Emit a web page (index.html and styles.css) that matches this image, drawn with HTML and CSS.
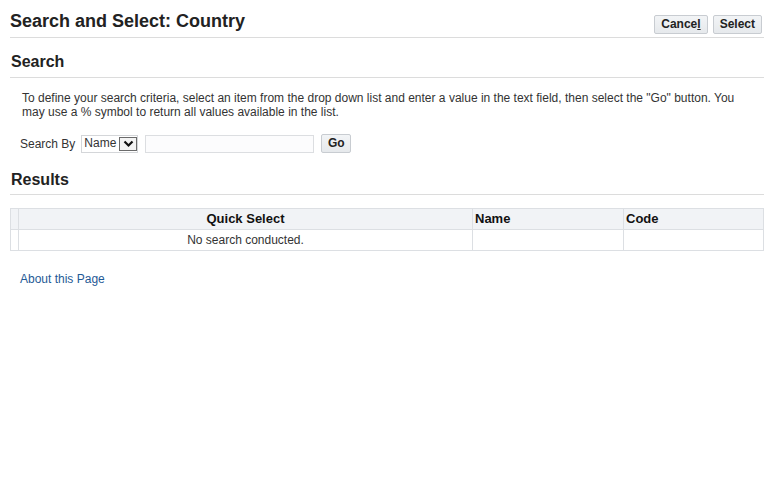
FILE: index.html
```html
<!DOCTYPE html>
<html lang="en">
<head>
<meta charset="utf-8">
<title>Search and Select: Country</title>
<link rel="stylesheet" href="styles.css">
</head>
<body>
<div class="page">
  <div class="titlebar">
    <h1 class="title">Search and Select: Country</h1>
    <div class="actions">
      <button class="btn" type="button">Cance<u>l</u></button>
      <button class="btn" type="button">Select</button>
    </div>
  </div>

  <h2 class="section">Search</h2>
  <p class="hint">To define your search criteria, select an item from the drop down list and enter a value in the text field, then select the "Go" button. You may use a % symbol to return all values available in the list.</p>
  <div class="searchrow">
    <span class="label">Search By</span>
    <span class="select"><span class="select-text">Name</span><span class="select-arrow"><svg width="11" height="8" viewBox="0 0 11 8"><path d="M1.5 1.5 L5.5 5.5 L9.5 1.5" fill="none" stroke="#111" stroke-width="2.2"/></svg></span></span>
    <span class="textfield"></span>
    <button class="btn go" type="button">Go</button>
  </div>

  <h2 class="section results-h">Results</h2>
  <table class="grid">
    <thead>
      <tr>
        <th class="sel"></th>
        <th class="qs">Quick Select</th>
        <th class="nm">Name</th>
        <th class="cd">Code</th>
      </tr>
    </thead>
    <tbody>
      <tr>
        <td class="sel"></td>
        <td class="qs center">No search conducted.</td>
        <td class="nm"></td>
        <td class="cd"></td>
      </tr>
    </tbody>
  </table>

  <a class="about" href="#">About this Page</a>
</div>
</body>
</html>
```
FILE: styles.css
```css
html, body {
  margin: 0;
  padding: 0;
  background: #ffffff;
}
body {
  font-family: "Liberation Sans", Arial, sans-serif;
  font-size: 12px;
  color: #333333;
}
.page {
  width: 754px;
  padding: 0 10px;
  display: flex;
  flex-direction: column;
}
.titlebar {
  display: flex;
  justify-content: space-between;
  align-items: flex-end;
  height: 37px;
  border-bottom: 1px solid #dcdcdc;
}
.title {
  margin: 0;
  padding-bottom: 5px;
  font-size: 18px;
  font-weight: bold;
  color: #222222;
  line-height: 22px;
}
.actions {
  display: flex;
  gap: 5px;
  padding-bottom: 3px;
  padding-right: 2px;
}
.btn {
  font-family: "Liberation Sans", Arial, sans-serif;
  font-size: 12px;
  font-weight: bold;
  color: #222222;
  background: linear-gradient(#f2f4f6, #e6e9ec);
  border: 1px solid #c8ccd1;
  border-radius: 2px;
  height: 19px;
  padding: 0 6px;
  line-height: 17px;
  margin: 0;
}
.btn u {
  text-decoration: underline;
}
.section {
  margin: 0;
  font-size: 16px;
  font-weight: bold;
  color: #222222;
  height: 40px;
  box-sizing: border-box;
  padding-top: 14px;
  padding-left: 1px;
  line-height: 20px;
  border-bottom: 1px solid #dcdcdc;
}
.hint {
  margin: 0;
  padding: 13px 12px 0 12px;
  line-height: 14px;
  color: #333333;
}
.searchrow {
  display: flex;
  align-items: center;
  margin-top: 15px;
  padding-left: 10px;
  height: 19px;
}
.label {
  margin-right: 6px;
}
.select {
  display: flex;
  align-items: center;
  box-sizing: border-box;
  width: 57px;
  height: 18px;
  border: 1px solid #d4d6d9;
  padding-left: 2px;
  margin-right: 7px;
  background: #ffffff;
}
.select-text {
  flex: 1;
  line-height: 14px;
  margin-top: -2px;
}
.select-arrow {
  display: flex;
  align-items: center;
  justify-content: center;
  box-sizing: border-box;
  width: 18px;
  height: 14px;
  border: 1px solid #6b6b6b;
  background: #f4f4f4;
}
.textfield {
  box-sizing: border-box;
  width: 169px;
  height: 18px;
  border: 1px solid #dcdee1;
  background: #fcfcfd;
  margin-right: 7px;
}
.go {
  width: 30px;
  padding: 0;
  height: 19px;
}
.results-h {
  height: 42px;
  padding-top: 17px;
  margin-top: 0;
}
.grid {
  margin-top: 13px;
  border-collapse: collapse;
  width: 754px;
  border: 1px solid #d5d8dc;
}
.grid th, .grid td {
  border: 1px solid #dcdfe3;
  padding: 0 2px;
}
.grid th {
  background: #f1f3f6;
  height: 20px;
  font-weight: bold;
  font-size: 13px;
  color: #111111;
  text-align: left;
  line-height: 16px;
}
.grid td {
  height: 20px;
  background: #ffffff;
  color: #333333;
}
.grid th.qs, .grid td.center {
  text-align: center;
}
.grid .sel {
  width: 3px;
}
.grid .qs {
  width: 449px;
}
.grid .nm {
  width: 146px;
}
.about {
  margin-top: 21px;
  margin-left: 10px;
  color: #1f5a96;
  text-decoration: none;
  align-self: flex-start;
}
```
